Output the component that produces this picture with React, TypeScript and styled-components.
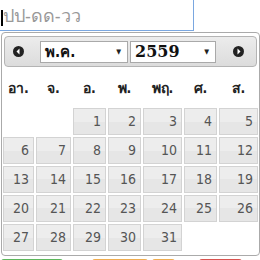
import React from "react";
import styled, { createGlobalStyle } from "styled-components";

const GlobalStyle = createGlobalStyle`
	html, body {
		margin: 0;
		padding: 0;
		background: #fff;
		overflow: hidden;
	}
	body {
		font-family: "DejaVu Sans Condensed", "DejaVu Sans", sans-serif;
	}
`;

const Page = styled.div`
	width: 260px;
	height: 260px;
	overflow: hidden;
`;

const DateInput = styled.div`
	position: relative;
	box-sizing: border-box;
	margin: -10px 0 0 -4px;
	width: 198px;
	height: 41px;
	border: 1px solid #7aa7e0;
	display: flex;
	align-items: center;
	padding: 10px 0 0 6px;
	font-size: 18px;
	color: #999;
`;

const Caret = styled.span`
	position: absolute;
	left: 4px;
	top: 19px;
	width: 2px;
	height: 16px;
	background: #000;
`;

const Picker = styled.div`
	box-sizing: border-box;
	margin: 1px 0 0 1px;
	width: 259px;
	border: 1px solid #aaa;
	border-radius: 4px;
	background: #fff;
	padding: 3px 2px 4px;
`;

const Header = styled.div`
	box-sizing: border-box;
	height: 31px;
	border: 1px solid #b4b4b4;
	border-radius: 4px;
	background: linear-gradient(#ececec, #dcdcdc);
	display: flex;
	align-items: center;
	padding: 0 0 0 8px;
`;

const NavIcon = styled.svg`
	flex: none;
	width: 11px;
	height: 11px;
`;

const SelectBox = styled.div<{ w: number }>`
	box-sizing: border-box;
	width: ${(p) => p.w}px;
	height: 22px;
	border: 1px solid #a9a9a9;
	background: #fff;
	display: flex;
	align-items: center;
	justify-content: space-between;
	padding: 0 6px 0 4px;
	font-weight: bold;
	font-size: 15px;
	color: #111;
`;

const YearText = styled.span`
	font-family: "DejaVu Serif", serif;
	font-size: 16px;
`;

const Arrow = styled.span`
	font-size: 7px;
	color: #222;
`;

const Selects = styled.div`
	display: flex;
	gap: 2px;
	margin: 0 17px 0 16px;
`;

const Grid = styled.div`
	display: grid;
	grid-template-columns: 31px 35px 33px 33px 39px 33px 39px;
	column-gap: 2px;
	row-gap: 2px;
	margin: 0 -4px 0 -1px;
`;

const DayName = styled.div`
	height: 39px;
	display: flex;
	align-items: center;
	justify-content: center;
	padding-top: 2px;
	box-sizing: border-box;
	font-weight: bold;
	font-size: 14px;
	color: #222;
`;

const Cell = styled.div<{ empty?: boolean }>`
	box-sizing: border-box;
	height: 27px;
	border: 1px solid ${(p) => (p.empty ? "transparent" : "#d3d3d3")};
	background: ${(p) =>
		p.empty ? "transparent" : "linear-gradient(#ededed 0, #ededed 50%, #e6e6e6 50%, #e6e6e6 100%)"};
	color: #555;
	font-size: 14px;
	text-align: right;
	padding: 4px 4px 0 0;
`;

const Buttons = styled.div`
	display: flex;
	margin: 3px 0 0 1px;
`;

const Btn = styled.div<{ color: string; w: number; ml: number }>`
	width: ${(p) => p.w}px;
	margin-left: ${(p) => p.ml}px;
	height: 30px;
	border-radius: 3px;
	background: ${(p) => p.color};
`;

const dayNames = ["อา.", "จ.", "อ.", "พ.", "พฤ.", "ศ.", "ส."];

function Nav({ dir }: { dir: "prev" | "next" }) {
	return (
		<NavIcon viewBox="0 0 11 11">
			<circle cx="5.5" cy="5.5" r="5.5" fill="#222" />
			{dir === "prev" ? (
				<polygon points="6.5,2.5 3.5,5.5 6.5,8.5" fill="#fff" />
			) : (
				<polygon points="4.5,2.5 7.5,5.5 4.5,8.5" fill="#fff" />
			)}
		</NavIcon>
	);
}

export default function App() {
	const days: (number | null)[] = [null, null];
	for (let d = 1; d <= 31; d++) days.push(d);

	return (
		<Page>
			<GlobalStyle />
			<DateInput>
				<Caret />
				ปป-ดด-วว
			</DateInput>
			<Picker>
				<Header>
					<Nav dir="prev" />
					<Selects>
						<SelectBox w={88}>
							พ.ค.
							<Arrow>▼</Arrow>
						</SelectBox>
						<SelectBox w={86}>
							<YearText>2559</YearText>
							<Arrow>▼</Arrow>
						</SelectBox>
					</Selects>
					<Nav dir="next" />
				</Header>
				<Grid>
					{dayNames.map((n) => (
						<DayName key={n}>{n}</DayName>
					))}
					{days.map((d, i) => (
						<Cell key={i} empty={d === null}>
							{d}
						</Cell>
					))}
				</Grid>
			</Picker>
			<Buttons>
				<Btn color="#5cb85c" w={62} ml={0} />
				<Btn color="#f0ad4e" w={56} ml={29} />
				<Btn color="#f0ad4e" w={23} ml={4} />
				<Btn color="#d9534f" w={43} ml={24} />
			</Buttons>
		</Page>
	);
}
